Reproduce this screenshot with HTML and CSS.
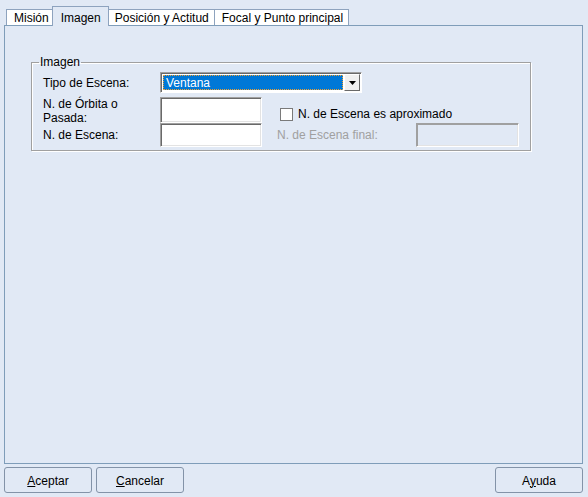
FILE: index.html
```html
<!DOCTYPE html>
<html lang="es">
<head>
<meta charset="utf-8">
<title>Imagen</title>
<link rel="stylesheet" href="styles.css">
</head>
<body>
<div class="dialog">
  <div class="tabs">
    <div class="tab">Misión</div>
    <div class="tab selected">Imagen</div>
    <div class="tab">Posición y Actitud</div>
    <div class="tab">Focal y Punto principal</div>
  </div>
  <div class="panel">
    <fieldset class="group">
      <legend>Imagen</legend>
      <div class="grid">
        <div class="label row1">Tipo de Escena:</div>
        <div class="combo">
          <div class="combo-value"><span>Ventana</span></div>
          <div class="combo-btn">
            <svg width="7" height="4" viewBox="0 0 7 4"><path d="M0 0H7L3.5 4Z" fill="#000"/></svg>
          </div>
        </div>

        <div class="label row2">N. de Órbita o<br>Pasada:</div>
        <div class="input in1"></div>
        <div class="check">
          <span class="box"></span>
          <span>N. de Escena es aproximado</span>
        </div>

        <div class="label row3">N. de Escena:</div>
        <div class="input in2"></div>
        <div class="label disabled final">N. de Escena final:</div>
        <div class="input off"></div>
      </div>
    </fieldset>
  </div>
  <div class="buttons">
    <button class="btn"><u>A</u>ceptar</button>
    <button class="btn"><u>C</u>ancelar</button>
    <span class="spacer"></span>
    <button class="btn">A<u>y</u>uda</button>
  </div>
</div>
</body>
</html>
```

FILE: styles.css
```css
html, body {
  margin: 0;
  padding: 0;
  background: #e1e9f5;
}

body {
  font-family: "Liberation Sans", Arial, sans-serif;
  font-size: 12px;
  line-height: 14px;
  color: #000;
}

.dialog {
  width: 588px;
  height: 497px;
  box-sizing: border-box;
  padding: 6px 5px 4px 4px;
  display: flex;
  flex-direction: column;
}

/* ---------- tabs ---------- */
.tabs {
  height: 19px;
  display: flex;
  align-items: flex-end;
  padding-left: 2px;
  position: relative;
  z-index: 1;
}

.tab {
  height: 16px;
  box-sizing: border-box;
  padding: 1px 5px 0 7px;
  border: 1px solid #8ea3be;
  border-bottom: none;
  background: #fff;
  white-space: nowrap;
  margin-right: -1px;
}

.tab.selected {
  height: 20px;
  margin: 0 -2px -1px -2px;
  padding: 4px 7px 0 8px;
  background: #e1e9f5;
  position: relative;
  z-index: 2;
}

/* ---------- panel ---------- */
.panel {
  flex: 1;
  border: 1px solid #7f9db9;
  padding: 29px 51px 0 26px;
}

.group {
  margin: 0;
  padding: 3px 11px 3px 11px;
  border: 1px solid #a0a0a0;
  box-shadow: 1px 1px 0 #fff, inset 1px 1px 0 #fff;
  min-width: 0;
}

.group legend {
  padding: 0 1px;
  margin-left: -4px;
  line-height: 14px;
}

.grid {
  display: grid;
  grid-template-columns: 117px 102px 15px 139px 103px;
  grid-template-rows: 21px 30px 24px;
}

.label {
  white-space: nowrap;
}

.label.row1 { grid-column: 1; grid-row: 1; align-self: center; }
.label.row2 { grid-column: 1; grid-row: 2; align-self: start; margin-top: 4px; }
.label.row3 { grid-column: 1; grid-row: 3; align-self: center; }

/* combo */
.combo {
  grid-column: 2 / 5;
  grid-row: 1;
  width: 202px;
  height: 21px;
  box-sizing: border-box;
  display: flex;
  border: 1px solid;
  border-color: #a0a0a0 #fff #fff #a0a0a0;
  box-shadow: inset 1px 1px 0 #696969;
  padding: 1px;
  background: #fff;
}

.combo-value {
  flex: 1;
  padding: 1px;
}

.combo-value span {
  display: block;
  height: 100%;
  box-sizing: border-box;
  background: #0078d7;
  color: #fff;
  border: 1px dotted #f0a030;
  padding-left: 2px;
  line-height: 14px;
}

.combo-btn {
  width: 16px;
  box-sizing: border-box;
  background: #f0f0f0;
  border: 1px solid;
  border-color: #fff #696969 #696969 #fff;
  display: flex;
  align-items: center;
  justify-content: center;
}

/* inputs */
.input {
  box-sizing: border-box;
  background: #fff;
  border: 1px solid;
  border-color: #a0a0a0 #fff #fff #a0a0a0;
  box-shadow: inset 1px 1px 0 #696969, inset -1px -1px 0 #e3e3e3;
}

.input.in1 { grid-column: 2; grid-row: 2; margin-top: 4px; }
.input.in2 { grid-column: 2; grid-row: 3; }
.input.off {
  grid-column: 5;
  grid-row: 3;
  background: #e1e9f5;
  box-shadow: inset 1px 1px 0 #a0a0a0, inset -1px -1px 0 #e3e3e3;
}

/* checkbox */
.check {
  grid-column: 4 / 6;
  grid-row: 2;
  align-self: end;
  display: flex;
  align-items: center;
  gap: 5px;
  margin-left: 3px;
  margin-bottom: 2px;
  white-space: nowrap;
}

.check .box {
  width: 13px;
  height: 13px;
  box-sizing: border-box;
  background: #fff;
  border: 1px solid #7a7a7a;
}

.label.final {
  grid-column: 4;
  grid-row: 3;
  align-self: center;
}

.disabled {
  color: #a0a0a0;
}

/* ---------- buttons ---------- */
.buttons {
  margin-top: 3px;
  height: 26px;
  display: flex;
  gap: 4px;
}

.spacer { flex: 1; }

.btn {
  width: 88px;
  height: 26px;
  box-sizing: border-box;
  font: inherit;
  color: #000;
  background: #e1e9f5;
  border: 1px solid #8393a8;
  border-radius: 3px;
  padding: 1px 0 0 0;
}
```
